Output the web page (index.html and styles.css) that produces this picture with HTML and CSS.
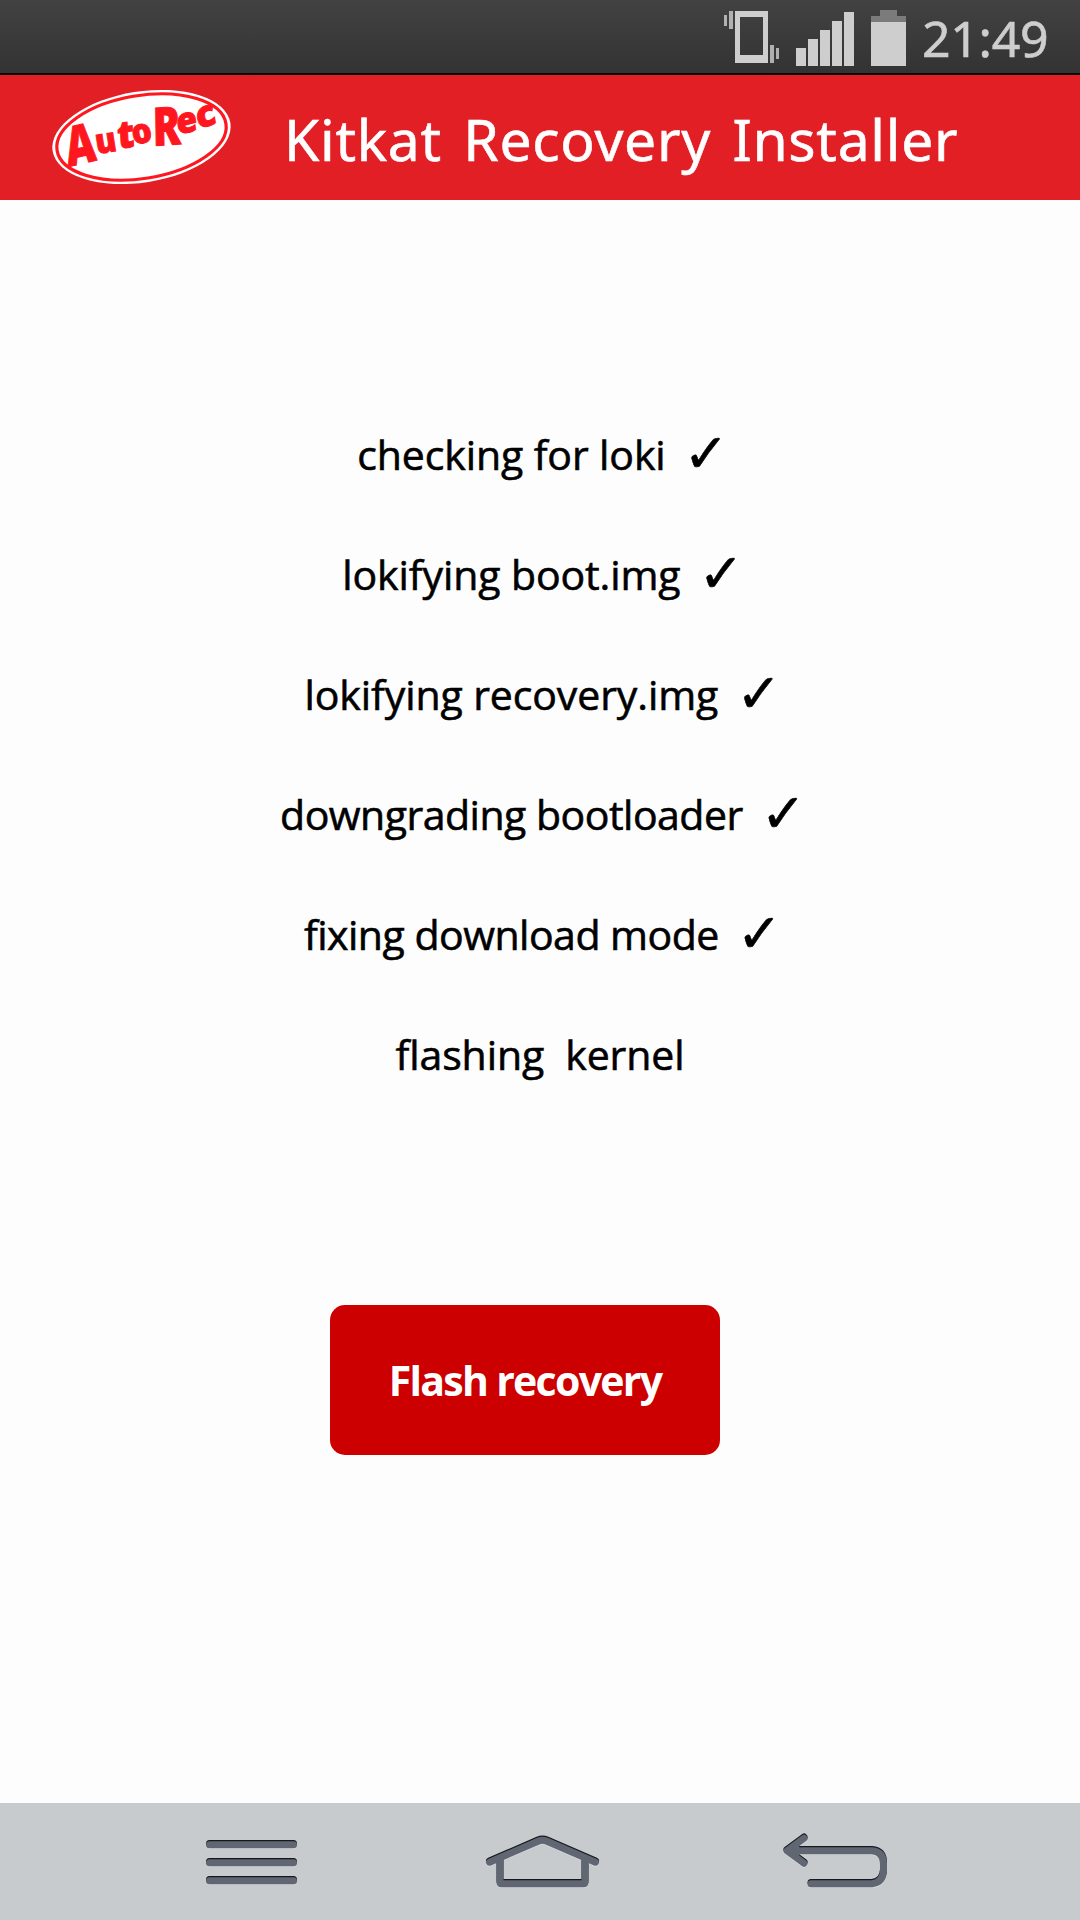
FILE: index.html
```html
<!DOCTYPE html>
<html lang="en">
  <head>
    <title>AutoRec</title>
    <meta charset="UTF-8">
    <link rel="stylesheet" href="styles.css">
  </head>
  <body>
    <div class="status-bar">
      <svg class="status-icons" width="190" height="73" viewBox="720 0 190 73">
        <!-- vibrate -->
        <g fill="#cecece">
          <path fill-rule="evenodd" d="M735 11h33v52h-33zM740 17v38h23v-38z"/>
          <path d="M729 11h4v18h-4zM770 45h4v18h-4z" opacity=".8"/>
          <path d="M724 15h3v11h-3zM776 48h3v11h-3z" opacity=".8"/>
        </g>
        <!-- signal -->
        <path fill="#cecece" d="M796 48h10v18h-10zM808 39h10v27h-10zM820 30h10v36h-10zM832 21h10v45h-10zM844 12h10v54h-10z"/>
        <!-- battery -->
        <path fill="#7b7b7b" d="M880 10h17v6h9v7h-35v-7h9z"/>
        <path fill="#cecece" d="M871 22h35v44h-35z"/>
      </svg>
      <span class="clock">21:49</span>
    </div>

    <header>
      <svg class="logo" width="181" height="97" viewBox="51 89 181 97">
        <g transform="rotate(-9 141.5 137)">
          <ellipse cx="141.5" cy="137" rx="90" ry="45.5" fill="#fff"/>
          <ellipse cx="141.5" cy="137" rx="85.500" ry="41.500" fill="#fff" stroke="#ff1720" stroke-width="3.200"/>
        </g>
        <g class="logo-text">
          <text transform="translate(68 167) rotate(-13) skewX(-6)" font-size="54" textLength="30" lengthAdjust="spacingAndGlyphs">A</text>
          <text transform="translate(97 154) rotate(-9)" font-size="34" textLength="21" lengthAdjust="spacingAndGlyphs">u</text>
          <text transform="translate(118 149) rotate(-9) skewX(-6)" font-size="38" textLength="17" lengthAdjust="spacingAndGlyphs">t</text>
          <text transform="translate(134 145) rotate(-12)" font-size="34" textLength="20" lengthAdjust="spacingAndGlyphs">o</text>
          <text transform="translate(153 146) rotate(-4) skewX(-3)" font-size="53" textLength="28" lengthAdjust="spacingAndGlyphs">R</text>
          <text transform="translate(178 135) rotate(-14) skewX(-6)" font-size="35" textLength="21" lengthAdjust="spacingAndGlyphs">e</text>
          <text transform="translate(198 129) rotate(-16) skewX(-6)" font-size="36" textLength="20" lengthAdjust="spacingAndGlyphs">c</text>
        </g>
      </svg>
      <h1>Kitkat Recovery Installer</h1>
    </header>

    <main>
      <ul class="steps">
        <li><span>checking for loki</span><i>✓</i></li>
        <li><span>lokifying boot.img</span><i>✓</i></li>
        <li><span>lokifying recovery.img</span><i>✓</i></li>
        <li class="tight"><span>downgrading bootloader</span><i>✓</i></li>
        <li class="tight"><span>fixing download mode</span><i>✓</i></li>
        <li><span>flashing&nbsp; kernel</span></li>
      </ul>
      <button>Flash recovery</button>
    </main>

    <nav>
      <svg width="1080" height="117" viewBox="0 1803 1080 117">
        <defs>
          <g id="icons">
            <path d="M209.500 1844H293.500M209.500 1862H293.500M209.500 1880H293.500"/>
            <path d="M489.500 1861.500L538 1840.500Q542.500 1838.500 547 1840.500L595.500 1861.500"/>
            <path d="M500 1859V1881.500Q500 1883 501.500 1883H583.500Q585 1883 585 1881.500V1859"/>
            <path d="M804 1837.500L787 1850L804 1862.500M790 1850H872Q883.500 1851 883.500 1863V1870Q883 1882 872 1883H811"/>
            <path d="M788 1850L796 1847V1853Z"/>
          </g>
        </defs>
        <use href="#icons" class="edge-light" y="1.500"/>
        <use href="#icons" class="edge-dark" y="-0.500"/>
        <use href="#icons" class="face" y="0.700"/>
      </svg>
    </nav>
  </body>
</html>
```
FILE: styles.css
```css
body {
  margin: 0;
  width: 1080px;
  height: 1920px;
  display: flex;
  flex-direction: column;
  background-color: #fdfdfd;
  color: #000;
  font-family: "Open Sans", "Noto Sans", sans-serif;
  overflow: hidden;
}

.status-bar {
  box-sizing: border-box;
  height: 75px;
  display: flex;
  justify-content: flex-end;
  padding-right: 30px;
  background: linear-gradient(#424242, #333);
  border-bottom: 2px solid #080808;
}

.clock {
  width: 128px;
  margin-left: 12px;
  font-family: "Noto Sans", sans-serif;
  font-size: 50px;
  line-height: 77px;
  letter-spacing: -0.3px;
  color: #cecece;
  -webkit-text-stroke: 0.6px #cecece;
  white-space: nowrap;
}

header {
  height: 125px;
  display: flex;
  align-items: flex-start;
  background-color: #e31f26;
}

.logo {
  margin: 14px 0 0 51px;
  overflow: visible;
}

.logo-text {
  font-family: "Open Sans", sans-serif;
  font-weight: 800;
  fill: #ff1720;
  stroke: #ff1720;
  stroke-width: 1px;
}

h1 {
  margin: 0 0 0 52px;
  font-family: "Noto Sans", sans-serif;
  font-size: 57px;
  font-weight: 400;
  line-height: 128px;
  letter-spacing: 0.7px;
  word-spacing: 6px;
  color: #fff;
  -webkit-text-stroke: 0.6px #fff;
  white-space: nowrap;
}

main {
  flex: 1;
  display: flex;
  flex-direction: column;
}

.steps {
  margin: 194px 0 0;
  padding: 0;
  list-style: none;
}

.steps li {
  height: 120px;
  display: flex;
  justify-content: center;
  font-size: 41px;
  line-height: 120px;
  letter-spacing: -0.1px;
  -webkit-text-stroke: 0.6px #000;
  white-space: nowrap;
}

.steps .tight {
  letter-spacing: -0.5px;
}

.steps i {
  margin-left: 18px;
  font-family: "DejaVu Sans", sans-serif;
  font-style: normal;
  font-size: 54px;
  letter-spacing: -6px;
}

button {
  width: 390px;
  height: 150px;
  margin: 191px 0 0 330px;
  padding: 0;
  border: none;
  border-radius: 15px;
  background-color: #c00;
  color: #fff;
  font-family: "Open Sans", sans-serif;
  font-size: 41px;
  font-weight: 700;
  letter-spacing: -1.7px;
}

nav {
  height: 117px;
  background-color: #c7cbce;
}

nav svg {
  display: block;
}

nav use {
  fill: none;
  stroke-width: 7px;
  stroke-linecap: round;
  stroke-linejoin: round;
}

.edge-light {
  stroke: #d9dadf;
}

.edge-dark {
  stroke: #15191c;
}

.face {
  stroke: #606672;
}
```
